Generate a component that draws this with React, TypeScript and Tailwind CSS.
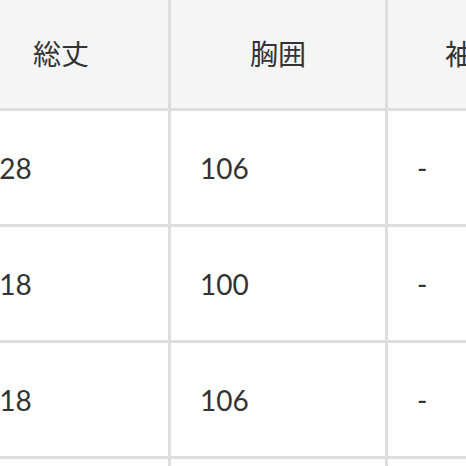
const headers = ["総丈", "胸囲", "袖丈"];

const rows = [
  ["128", "106", "-"],
  ["118", "100", "-"],
  ["118", "106", "-"],
  ["", "", ""],
];

export default function App() {
  return (
    <div className="w-[466px] h-[466px] overflow-hidden bg-white">
      <div
        className="ml-[-46px] grid grid-cols-[214px_214px_170px] gap-[3px] bg-[#dddddd] text-[28px] text-[#333333] w-max"
        style={{ fontFamily: "Lato, 'Noto Sans CJK JP', sans-serif" }}
      >
        {headers.map((h) => (
          <div
            key={h}
            className="h-[108px] bg-[#f5f5f5] flex items-center justify-center"
          >
            {h}
          </div>
        ))}
        {rows.map((row, i) =>
          row.map((cell, j) => (
            <div
              key={`${i}-${j}`}
              className="h-[113px] bg-white flex items-center pl-[29px]"
            >
              {cell}
            </div>
          ))
        )}
      </div>
    </div>
  );
}
